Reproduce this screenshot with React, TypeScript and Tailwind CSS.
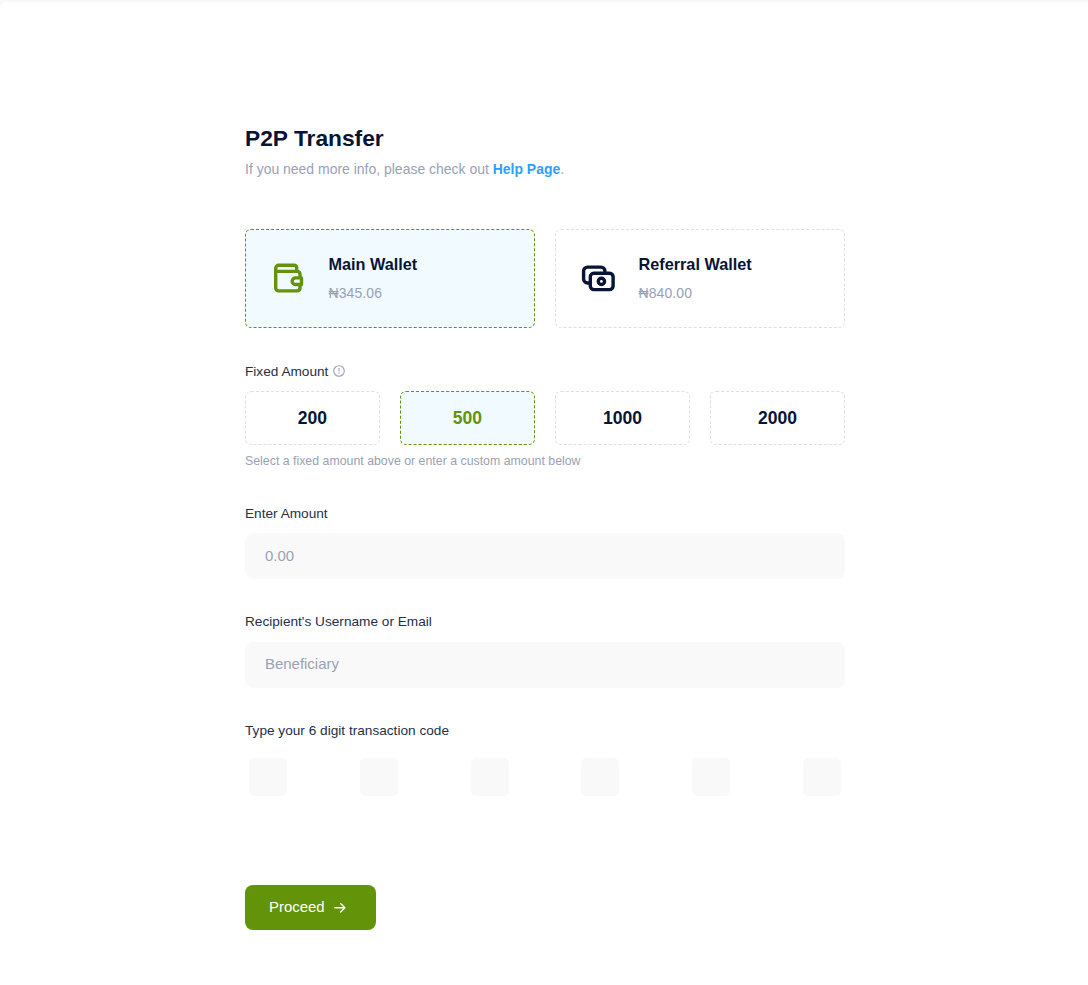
import React, { useState } from "react";

const WalletIcon = () => (
  <svg width="36" height="36" viewBox="0 0 36 36" fill="none" stroke="currentColor" strokeWidth="3.4" strokeLinejoin="round" className="mb-px">
    <path d="M4.7 11.4V8.2a3 3 0 0 1 3-3h15.6a2.4 2.4 0 0 1 2.4 2.4v3.6" />
    <path d="M4.7 11.4h21.6a2.7 2.7 0 0 1 2.7 2.7v14.1a2.7 2.7 0 0 1-2.7 2.7H7.7a3 3 0 0 1-3-3z" />
    <path d="M30.5 17.9h-6a3.3 3.3 0 0 0 0 6.6h6z" className="fill-[#f1faff]" />
  </svg>
);

const CashIcon = () => (
  <svg width="36" height="36" viewBox="0 0 36 36" fill="none" stroke="currentColor" strokeWidth="3.4" className="mb-px">
    <path d="M9.2 23H6.6a4 4 0 0 1-4-4v-7.9a4 4 0 0 1 4-4h13.3a4 4 0 0 1 4 4v2" />
    <rect x="9.3" y="13.2" width="22.8" height="16.4" rx="3.5" />
    <circle cx="20.4" cy="21.4" r="3.1" />
  </svg>
);

const InfoIcon = () => (
  <svg width="12" height="12" viewBox="0 0 12 12" fill="none" stroke="#99a1b7" strokeWidth="1.1" className="block">
    <circle cx="6" cy="6" r="5.3" />
    <path d="M6 3v3.4M6 7.6v1.2" />
  </svg>
);

const ArrowIcon = () => (
  <svg width="12" height="12" viewBox="0 0 12 12" fill="none" stroke="currentColor" strokeWidth="1.4" strokeLinecap="round" strokeLinejoin="round" className="block">
    <path d="M.8 5.7h9.8M6.6 1.4l4.3 4.3L6.6 10" />
  </svg>
);

const wallets = [
  { name: "Main Wallet", balance: "₦345.06", icon: <WalletIcon /> },
  { name: "Referral Wallet", balance: "₦840.00", icon: <CashIcon /> },
];
const amounts = ["200", "500", "1000", "2000"];

const Label = ({ children }: { children: React.ReactNode }) => (
  <div className="flex h-5 items-center whitespace-nowrap text-[13.65px] leading-5 text-[#252f4a]">{children}</div>
);

export default function App() {
  const [wallet, setWallet] = useState(0);
  const [amount, setAmount] = useState("500");
  return (
    <div className="min-h-[985px] bg-[#f8f8f8] pt-0.5 font-['Liberation_Sans',Arial,sans-serif]">
      <main className="min-h-[983px] rounded-tl-md bg-white pl-[245px] pt-[120px]">
        <form className="w-[600px]" onSubmit={(e) => e.preventDefault()}>
          <h2 className="h-8 whitespace-nowrap text-[22.75px] font-bold leading-8 text-[#071437]">P2P Transfer</h2>
          <p className="mt-[5px] h-5 whitespace-nowrap text-[13.975px] leading-5 text-[#99a1b7]">
            If you need more info, please check out <a className="font-bold text-[#2f9ff8]">Help Page</a>.
          </p>

          <div className="mt-[50px] grid grid-cols-2 gap-5">
            {wallets.map((w, i) => (
              <button
                key={w.name}
                type="button"
                onClick={() => setWallet(i)}
                className={`flex h-[99px] items-center rounded-md border border-dashed pl-[25px] text-left ${
                  wallet === i ? "border-[#629309] bg-[#f1faff] text-[#629309]" : "border-[#dbdfe9] bg-white text-[#071437]"
                }`}
              >
                {w.icon}
                <span className="ml-[21.5px] block">
                  <span className="block h-6 text-[16.25px] font-bold leading-[22px] text-[#071437]">{w.name}</span>
                  <span className="mt-[6px] mb-px block h-5 text-[13.975px] leading-5 tracking-[0.1px] text-[#99a1b7]">{w.balance}</span>
                </span>
              </button>
            ))}
          </div>

          <div className="mt-[34px]">
            <Label>
              Fixed Amount <span className="mb-[2px] ml-[5px]"><InfoIcon /></span>
            </Label>
          </div>
          <div className="mt-[9px] grid grid-cols-4 gap-5">
            {amounts.map((a) => (
              <button
                key={a}
                type="button"
                onClick={() => setAmount(a)}
                className={`h-[54px] rounded-md border border-dashed text-[17.55px] font-bold ${
                  amount === a ? "border-[#629309] bg-[#f1faff] text-[#629309]" : "border-[#dbdfe9] bg-white text-[#071437]"
                }`}
              >
                {a}
              </button>
            ))}
          </div>
          <p className="mt-[7px] h-[18px] text-[12.35px] leading-[18px] text-[#99a1b7]">
            Select a fixed amount above or enter a custom amount below
          </p>

          <div className="mt-[34px]">
            <Label>Enter Amount</Label>
          </div>
          <input
            placeholder="0.00"
            className="mt-[9px] block h-[46px] w-full rounded-lg bg-[#f9f9f9] px-5 pb-[2px] text-[14.95px] outline-none placeholder:text-[#99a1b7]"
          />

          <div className="mt-[33px]">
            <Label>Recipient's Username or Email</Label>
          </div>
          <input
            placeholder="Beneficiary"
            className="mt-[10px] block h-[46px] w-full rounded-lg bg-[#f9f9f9] px-5 pb-[3px] text-[14.95px] outline-none placeholder:text-[#99a1b7]"
          />

          <div className="mt-[33px]">
            <Label>Type your 6 digit transaction code</Label>
          </div>
          <div className="mt-[17px] flex justify-between px-1">
            {[0, 1, 2, 3, 4, 5].map((n) => (
              <input key={n} maxLength={1} className="size-[38px] rounded-[5px] bg-[#f9f9f9] text-center outline-none" />
            ))}
          </div>

          <button type="submit" className="mt-[89px] flex h-[45px] w-[131px] items-center rounded-lg bg-[#629309] pl-6 text-[14.95px] text-white">
            Proceed
            <span className="ml-[9px]"><ArrowIcon /></span>
          </button>
        </form>
      </main>
    </div>
  );
}
